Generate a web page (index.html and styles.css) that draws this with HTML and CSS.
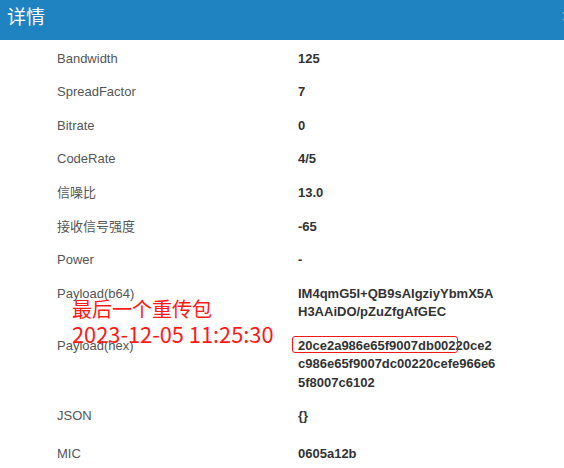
FILE: index.html
```html
<!DOCTYPE html>
<html lang="zh-CN">
<head>
    <meta charset="UTF-8">
    <meta name="viewport" content="width=device-width, initial-scale=1.0">
    <title>详情</title>
    <link rel="stylesheet" href="styles.css">
</head>
<body>
    <header class="modal-header">
        <h1>详情</h1>
        <span class="close">&times;</span>
    </header>

    <div class="modal-body">
        <!-- 帧详情 -->
        <div class="detail-list">
            <div class="detail-row">
                <span class="label">Bandwidth</span>
                <span class="value">125</span>
            </div>
            <div class="detail-row">
                <span class="label">SpreadFactor</span>
                <span class="value">7</span>
            </div>
            <div class="detail-row">
                <span class="label">Bitrate</span>
                <span class="value">0</span>
            </div>
            <div class="detail-row">
                <span class="label">CodeRate</span>
                <span class="value">4/5</span>
            </div>
            <div class="detail-row">
                <span class="label">信噪比</span>
                <span class="value">13.0</span>
            </div>
            <div class="detail-row">
                <span class="label">接收信号强度</span>
                <span class="value">-65</span>
            </div>
            <div class="detail-row">
                <span class="label">Power</span>
                <span class="value">-</span>
            </div>
            <div class="detail-row">
                <span class="label">Payload(b64)</span>
                <span class="value">IM4qmG5I+QB9sAIgziyYbmX5AH3AAiDO/pZuZfgAfGEC</span>
            </div>
            <div class="detail-row">
                <span class="label">Payload(hex)</span>
                <span class="value"><span class="marked">20ce2a986e65f9007db002</span>20ce2c986e65f9007dc00220cefe966e65f8007c6102</span>
            </div>
            <div class="detail-row json-row">
                <span class="label">JSON</span>
                <span class="value">{}</span>
            </div>
            <div class="detail-row">
                <span class="label">MIC</span>
                <span class="value">0605a12b</span>
            </div>
        </div>

        <!-- 截图标注 -->
        <div class="note">
            <p>最后一个重传包</p>
            <p class="note-time">2023-12-05 11:25:30</p>
        </div>
    </div>
</body>
</html>
```

FILE: styles.css
```css
body {
    font-family: 'Liberation Sans', Arial, 'Noto Sans CJK SC', sans-serif;
    background-color: #fff;
    margin: 0;
    padding: 0;
    overflow: hidden;
}
.modal-header {
    display: flex;
    justify-content: space-between;
    height: 40px;
    padding-left: 7px;
    background-color: #1f82c1;
    color: white;
    overflow: hidden;
}
.modal-header h1 {
    margin: 0;
    font-size: 19px;
    font-weight: normal;
    line-height: 32px;
    font-family: 'Noto Sans CJK SC', sans-serif;
}
.close {
    margin-right: -9px;
    font-size: 20px;
    line-height: 32px;
    color: rgba(255, 255, 255, 0.5);
}
.modal-body {
    position: relative;
    padding-top: 2px;
}
.detail-row {
    display: grid;
    grid-template-columns: 241px 198px;
    padding: 7.6px 0 7.6px 57px;
    font-size: 13px;
    line-height: 18.4px;
}
.detail-row .label {
    color: #555;
}
.detail-row .value {
    color: #333;
    font-weight: bold;
    word-break: break-all;
}
.json-row {
    padding-bottom: 11.4px;
}
.marked {
    position: relative;
}
.marked::after {
    content: "";
    position: absolute;
    top: -1.5px;
    bottom: -0.7px;
    left: -6.5px;
    right: -2px;
    border: 1px solid #f01818;
    border-radius: 3px;
}
.note {
    position: absolute;
    left: 72px;
    top: 256px;
    color: #ff1a1a;
    font-family: 'Noto Sans CJK SC', sans-serif;
}
.note p {
    margin: 0;
    font-size: 20px;
    line-height: 25px;
}
.note .note-time {
    font-size: 21.8px;
}
```
